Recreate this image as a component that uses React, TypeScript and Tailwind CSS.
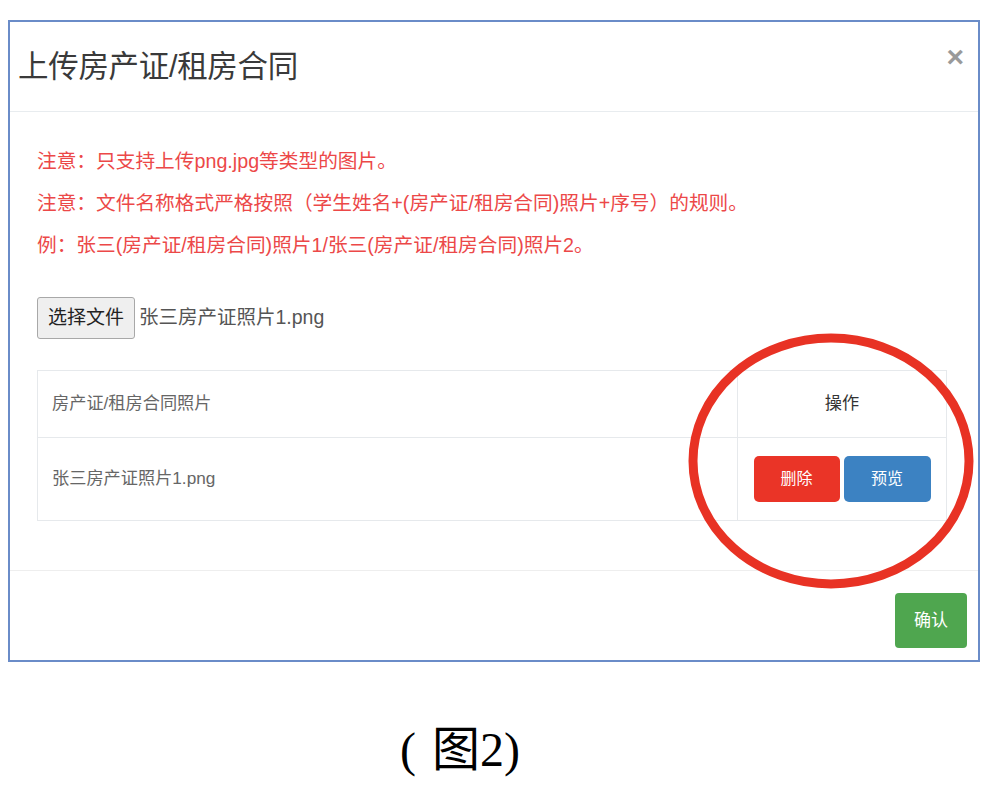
import React from "react"

const fileName = "张三房产证照片1.png"

function ActionButtons() {
  return (
    <div className="flex justify-center gap-1">
      <button className="w-[86px] h-[46px] rounded-[5px] bg-[#ea3427] text-white text-[16px]">删除</button>
      <button className="w-[87px] h-[46px] rounded-[5px] bg-[#3c82c2] text-white text-[16px]">预览</button>
    </div>
  )
}

export default function App() {
  return (
    <div
      className="relative w-[1004px] h-[796px] bg-white overflow-hidden"
      style={{ fontFamily: '"Liberation Sans", "Noto Sans CJK SC", sans-serif' }}
    >
      {/* dialog frame */}
      <div className="ml-2 mt-5 w-[972px] h-[642px] border-2 border-[#6a8cc8] flex flex-col">
        {/* header */}
        <div className="h-[90px] shrink-0 flex justify-between items-center border-b border-[#e8ecef] pl-2 pr-[14px]">
          <h1 className="text-[30.5px] leading-none text-[#3a3a3a] tracking-[-0.3px]">上传房产证/租房合同</h1>
          <span className="self-start mt-[20px] text-[30px] leading-none font-bold text-[#9a9a9a]">×</span>
        </div>

        {/* body */}
        <div className="flex-1 px-[27px] pt-[28px]">
          <div className="text-[19.7px] leading-[42px] text-[#ec4848]">
            <p>注意：只支持上传png.jpg等类型的图片。</p>
            <p>注意：文件名称格式严格按照（学生姓名+(房产证/租房合同)照片+序号）的规则。</p>
            <p>例：张三(房产证/租房合同)照片1/张三(房产证/租房合同)照片2。</p>
          </div>

          <div className="mt-[31px] flex items-center gap-1">
            <button className="w-[98px] h-[42px] rounded-[3px] border border-[#a8a8a8] bg-[#efefef] text-[19px] text-[#222]">
              选择文件
            </button>
            <span className="text-[19.5px] text-[#555]">{fileName}</span>
          </div>

          <table className="mt-[31px] w-[910px] border-collapse border border-[#e6e9ec] text-[17.2px]">
            <thead>
              <tr className="h-[67px]">
                <th className="w-[700px] border border-[#e6e9ec] pl-[14px] text-left font-normal text-[#666]">
                  房产证/租房合同照片
                </th>
                <th className="border border-[#e6e9ec] text-center font-normal text-[#333]">操作</th>
              </tr>
            </thead>
            <tbody>
              <tr className="h-[83px]">
                <td className="border border-[#e6e9ec] pl-[14px] text-[#666]">{fileName}</td>
                <td className="border border-[#e6e9ec]">
                  <ActionButtons />
                </td>
              </tr>
            </tbody>
          </table>
        </div>

        {/* footer */}
        <div className="h-[90px] shrink-0 border-t border-[#eeeeee] flex justify-end items-start pt-[22px] pr-[11px]">
          <button className="w-[72px] h-[55px] rounded-[4px] bg-[#4fa64f] text-white text-[17px]">确认</button>
        </div>
      </div>

      {/* caption */}
      <div
        className="ml-[400px] mt-[64px] text-[48px] leading-none text-black flex items-center"
        style={{ fontFamily: '"Liberation Serif", "Noto Sans CJK SC", serif' }}
      >
        <span>(</span>
        <span className="ml-[16px]">图2</span>
        <span>)</span>
      </div>

      {/* hand-drawn annotation ring */}
      <svg className="absolute left-[684px] top-[329px]" width="294" height="264" viewBox="0 0 294 264">
        <ellipse cx="147" cy="132" rx="138" ry="123" fill="none" stroke="#e83224" strokeWidth="9" />
      </svg>
    </div>
  )
}
